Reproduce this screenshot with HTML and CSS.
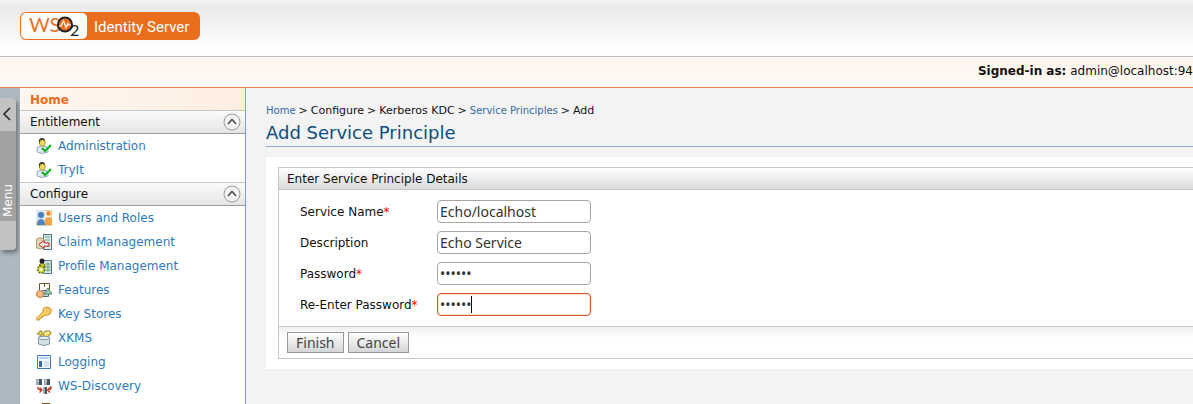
FILE: index.html
```html
<!DOCTYPE html>
<html lang="en">
<head>
<meta charset="utf-8">
<title>WSO2 Identity Server</title>
<link rel="stylesheet" href="styles.css">
</head>
<body>
<svg class="defs" width="0" height="0" aria-hidden="true">
  <symbol id="user-check" viewBox="0 0 16 16">
    <path d="M1 14V11Q1 8 5 8H8Q12 8 12 12V14Q6 17 1 14Z" fill="#dce9f5" stroke="#92a9bd"/>
    <path d="M3 6Q2 0 6 0Q10 0 9 6Z" fill="#222"/>
    <ellipse cx="6.300" cy="5" rx="2.800" ry="3.200" fill="#f5dc55" stroke="#8b7420" stroke-width=".6"/>
    <path d="M6 10L9 13L15 7" fill="none" stroke="#12b51b" stroke-width="2.200"/>
  </symbol>
  <symbol id="chevron" viewBox="0 0 18 18">
    <circle cx="9" cy="9" r="8" fill="#f3f3f3" stroke="#999"/>
    <path d="M5 11L9 6.500L13 11" fill="none" stroke="#555" stroke-width="1.800"/>
  </symbol>
</svg>
<header class="header">
  <svg class="logo" viewBox="0 0 180 28" role="img" aria-label="WSO2 Identity Server">
    <rect width="180" height="28" rx="6" fill="#eb6e1f"/>
    <rect x="1" y="1" width="66" height="26" rx="5" fill="#fff"/>
    <text class="logo-ws" x="9" y="20">WS</text>
    <circle cx="45" cy="12.500" r="7" fill="#eb6e1f" stroke="#222" stroke-width="2"/>
    <path d="M39 14H41L43.500 9L46 15.500L48 11.500L49 13H51" fill="none" stroke="#fff" stroke-width="1.200"/>
    <text class="logo-two" x="50" y="24">2</text>
    <text class="logo-name" x="74" y="20">Identity Server</text>
  </svg>
</header>
<div class="session"><strong>Signed-in as:</strong>&nbsp;admin@localhost:94</div>
<div class="page">
  <div class="rail">
    <button class="menu-tab" type="button">
      <svg width="16" height="33" viewBox="0 0 16 33" aria-hidden="true"><path d="M10 10L4 16L10 22" fill="none" stroke="#222" stroke-width="1.500"/></svg>
      <span class="menu-label">Menu</span>
    </button>
  </div>
  <nav class="sidebar">
    <a class="home" href="#">Home</a>
    <h2 class="group">Entitlement<svg width="18" height="18" aria-hidden="true"><use href="#chevron"/></svg></h2>
    <ul class="links">
      <li><svg class="icon"><use href="#user-check"/></svg><a href="#">Administration</a></li>
      <li><svg class="icon"><use href="#user-check"/></svg><a href="#">TryIt</a></li>
    </ul>
    <h2 class="group">Configure<svg width="18" height="18" aria-hidden="true"><use href="#chevron"/></svg></h2>
    <ul class="links">
      <li><svg class="icon" viewBox="0 0 16 16"><path d="M.5.500H15.500V15.500H.5Z" fill="#fbf3df" stroke="#d8cda9"/><path d="M0 0H9V11H0Z" fill="#d5e6f6"/><circle cx="5" cy="5" r="3" fill="#477fb9"/><path d="M1 15Q1 9 5 9Q9 9 9 15Z" fill="#4f86bd"/><circle cx="12.500" cy="3.500" r="2.200" fill="#f08321"/><path d="M9 15V9Q12 5 16 9V15Z" fill="#f3a247"/></svg><a href="#">Users and Roles</a></li>
      <li><svg class="icon" viewBox="0 0 16 16"><path d="M7.500.500H15.500V15.500H7.500Z" fill="#d8ebf0" stroke="#55717d"/><path d="M9 3H14M9 6H14M9 9H14M9 12H14" stroke="#73aa82"/><path d="M.5 5Q4 2 8 5V14Q4 16 .5 14Z" fill="#e0d1af" stroke="#b29e76"/><path d="M3 10.500L8 6.500V9H13V12H8V14.500Z" fill="#fff" stroke="#bd2525"/></svg><a href="#">Claim Management</a></li>
      <li><svg class="icon" viewBox="0 0 16 16"><path d="M7.500 2.500H15.500V15.500H7.500Z" fill="#d8ebf0" stroke="#55717d"/><path d="M12 4V14M9 6H15M9 9H15M9 12H15" stroke="#66a071"/><circle cx="6" cy="3" r="2.500" fill="#222"/><path d="M3 9Q3 5 7 5Q9 6 9 10Z" fill="#d9d42a" stroke="#655f15"/><circle cx="5" cy="11.500" r="3.500" fill="#d2dc38" stroke="#657c18" stroke-dasharray="2 1" stroke-width="1.500"/><circle cx="5" cy="11.500" r="1.300" fill="#fff"/></svg><a href="#">Profile Management</a></li>
      <li><svg class="icon" viewBox="0 0 16 16"><path d="M3.500 8V1.500H13.500V8M8.500 1V5" fill="none" stroke="#755725"/><path d="M6.500 8.500H12.500V14.500H6.500Z" fill="#bdd4e9" stroke="#486e91"/><path d="M12 6L16 12H8Z" fill="#a1cba7" stroke="#568669"/><circle cx="4" cy="12" r="3.500" fill="#f8ba83" stroke="#c47634"/></svg><a href="#">Features</a></li>
      <li><svg class="icon" viewBox="0 0 16 16"><path d="M1 14L.5 12L7 6Q6 3 9 1.500Q12 0 15 3Q16 6 14 8Q12 10 9 9L7.500 10.500L6 10.500L6 12L4 12L3.500 14Z" fill="#fad15c" stroke="#d0902d"/><circle cx="12" cy="4.300" r="1.200" fill="#fff" stroke="#d0902d" stroke-width=".7"/></svg><a href="#">Key Stores</a></li>
      <li><svg class="icon" viewBox="0 0 16 16"><path d="M2.500 7V14Q8 17 13.500 14V7Z" fill="#d5e3e8" stroke="#829aa4"/><path d="M1 4L4 1H6V8H4V4ZM8 8L7 4L9 1H14L15 4L11 7Z" fill="#f3dc4a" stroke="#756d28" stroke-width=".8"/><path d="M9 4L13 2" stroke="#fff"/><ellipse cx="8" cy="8" rx="5.500" ry="1.700" fill="#edf4f6" stroke="#829aa4"/></svg><a href="#">XKMS</a></li>
      <li><svg class="icon" viewBox="0 0 16 16"><path d="M1.500 1.500H14.500V14.500H1.500Z" fill="#f4f8fd" stroke="#4778b2"/><path d="M3 3H13V5H3Z" fill="#b5d3ef"/><path d="M3 7H6V13H3Z" fill="#316da9"/><path d="M8 7H13V13H8Z" fill="#d3e3f3"/></svg><a href="#">Logging</a></li>
      <li><svg class="icon" viewBox="0 0 16 16"><path d="M0 1H6V7H0ZM8 1H14V7H8ZM7 9H11V16H7Z" fill="#9caab2"/><path d="M3 1H6V7H3ZM11 1H14V7H11ZM9 9H11V16H9Z" fill="#46535e"/><path d="M1 3H3M9 3H11" stroke="#d8e8f2"/><path d="M1.500 9Q2 12 5 12M3.500 9.500L6 12L3.500 14.500M14.500 8Q16 11 13 12M14 9.500L11.500 12L14 14.500" fill="none" stroke="#b93623" stroke-width="1.300"/></svg><a href="#">WS-Discovery</a></li>
      <li><svg class="icon" viewBox="0 0 16 16"><path d="M2.500 2.500H10.500V15.500H2.500Z" fill="#eee" stroke="#777"/><path d="M6 1.500H14V8H6Z" fill="#fff" stroke="#765f22"/></svg></li>
    </ul>
  </nav>
  <main class="content">
    <div class="crumbs"><a href="#">Home</a><span>&gt;</span><span>Configure</span><span>&gt;</span><span>Kerberos KDC</span><span>&gt;</span><a href="#">Service Principles</a><span>&gt;</span><span>Add</span></div>
    <h1 class="title">Add Service Principle</h1>
    <div class="work">
      <form class="panel">
        <h2 class="panel-title">Enter Service Principle Details</h2>
        <div class="fields">
          <label for="name">Service Name<span class="required">*</span></label>
          <div class="field"><input id="name" type="text" value="Echo/localhost"></div>
          <label for="description">Description</label>
          <div class="field"><input id="description" type="text" value="Echo Service"></div>
          <label for="password">Password<span class="required">*</span></label>
          <div class="field"><input id="password" type="password" value="secret"></div>
          <label for="repeat">Re-Enter Password<span class="required">*</span></label>
          <div class="field"><input id="repeat" class="active" type="password" value="secret"><span class="caret"></span></div>
        </div>
        <div class="actions"><button type="button">Finish</button><button type="button">Cancel</button></div>
      </form>
    </div>
  </main>
</div>
</body>
</html>
```
FILE: styles.css
```css
* { box-sizing: border-box; }
body {
  margin: 0;
  min-height: 100vh;
  display: flex;
  flex-direction: column;
  overflow: hidden;
  font: 12px/16px "DejaVu Sans", sans-serif;
  color: #111;
  background: #f3f3f3;
}
h1, h2, ul { margin: 0; padding: 0; font-weight: normal; }
a { color: #2f7abd; text-decoration: none; }
.defs { position: absolute; }
.header {
  height: 57px;
  padding: 12px 20px;
  background: linear-gradient(#f3f3f3, #e9eaea 8px, #fff 52px);
  border-bottom: 1px solid #b9bec2;
}
.logo { display: block; width: 180px; height: 28px; }
.logo-ws { font: 20px "Lato", sans-serif; fill: #eb6e1f; }
.logo-two { font: 16px "Lato", sans-serif; fill: #222; }
.logo-name { font: 15px "Roboto", sans-serif; fill: #fff; }
.session {
  height: 31px;
  padding-top: 6px;
  display: flex;
  justify-content: flex-end;
  white-space: nowrap;
  background: linear-gradient(#fff4ec, #fffaf5);
  border-bottom: 1px solid #e8864f;
}
.page { display: flex; flex: 1; height: 316px; }
.rail { flex: none; width: 20px; padding-top: 10px; background: #adb9c1; }
.menu-tab {
  display: flex;
  flex-direction: column;
  width: 16px;
  height: 152px;
  padding: 0;
  border: 0;
  border-radius: 0 4px 4px 0;
  background: #c2c2c2;
  box-shadow: 2px 3px 4px #6d7377;
}
.menu-label {
  width: 16px;
  height: 90px;
  padding: 4px 0;
  background: #a2a2a2;
  color: #fff;
  font: 12px/16px "DejaVu Sans", sans-serif;
  text-align: left;
  writing-mode: vertical-rl;
  transform: rotate(180deg);
}
.sidebar {
  flex: none;
  width: 226px;
  background: #fff;
  border-right: 1px solid #e8864f;
}
.home {
  display: block;
  height: 22px;
  padding: 4px 10px;
  font-weight: bold;
  color: #ee6c1c;
  background: linear-gradient(90deg, #fff7f0, #fdeee2);
}
.group {
  display: flex;
  align-items: center;
  justify-content: space-between;
  height: 24px;
  padding: 0 4px 0 10px;
  font-size: 12px;
  background: linear-gradient(#fafafa, #e4e5e6);
  border-top: 1px solid #c5c5c5;
  border-bottom: 1px solid #9d9d9d;
}
.links { list-style: none; }
.links li { display: flex; align-items: center; gap: 6px; height: 24px; padding-left: 16px; }
.icon { width: 16px; height: 16px; }
.content { flex: 1; min-width: 0; padding: 15px 0 0 20px; }
.crumbs { display: flex; gap: 3px; font-size: 11px; white-space: nowrap; }
.crumbs a { font-size: 10px; line-height: 15px; color: #336a9e; }
.title {
  height: 28px;
  padding-top: 3px;
  font-size: 18px;
  line-height: 22px;
  color: #0d4d80;
  border-bottom: 1px solid #94a8c8;
}
.work { margin-top: 10px; padding: 10px 0 10px 12px; background: #fff; }
.panel { border: 1px solid #c8c8c8; border-right: 0; }
.panel-title {
  height: 22px;
  padding: 3px 8px;
  font-size: 12px;
  background: linear-gradient(#fff, #d8d9db);
  border-bottom: 1px solid #c8c8c8;
}
.fields {
  display: grid;
  grid-template-columns: 137px 154px;
  row-gap: 8px;
  align-items: center;
  padding: 10px 21px;
}
.required { color: #f00; }
.field { position: relative; }
.field input {
  display: block;
  width: 100%;
  height: 23px;
  padding: 0 2px;
  font: 14px "Noto Sans", sans-serif;
  color: #333;
  background: #fff;
  border: 1px solid #a9a49f;
  border-radius: 4px;
  outline: 0;
}
.field .active { border-color: #d4562b; box-shadow: inset 0 0 0 1px #fae1d7; }
.caret { position: absolute; left: 34px; top: 3px; width: 1px; height: 17px; background: #111; }
.actions {
  display: flex;
  gap: 4px;
  padding: 5px 8px;
  background: linear-gradient(#efefef, #fff 10px);
  border-top: 1px solid #c8c8c8;
}
.actions button {
  height: 21px;
  padding: 0 8px;
  font: 14px/18px "Noto Sans", sans-serif;
  color: #444;
  background: linear-gradient(#fff, #d5d6d8);
  border: 1px solid #999;
}
```
